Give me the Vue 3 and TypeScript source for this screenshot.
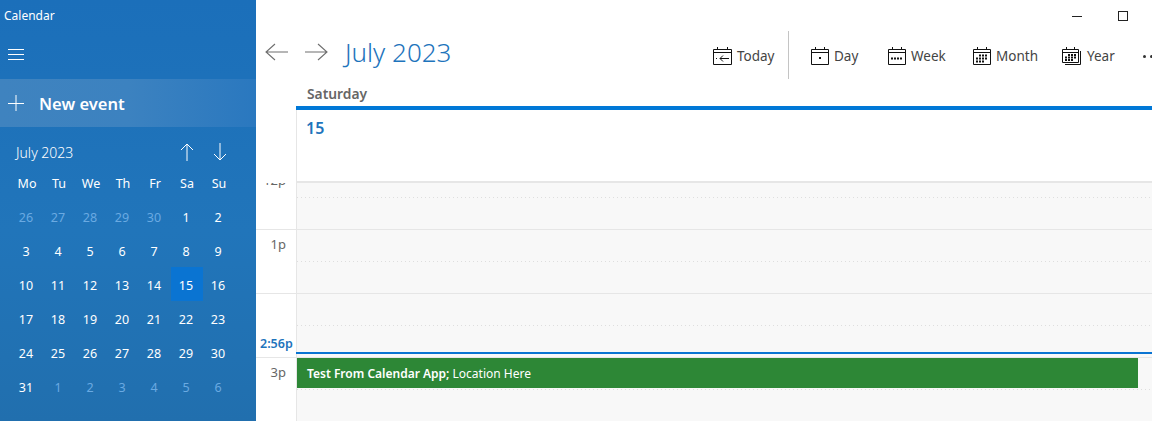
<script setup lang="ts">
interface Day {
  label: number;
  muted: boolean;
  selected: boolean;
}

const weekdays = ["Mo", "Tu", "We", "Th", "Fr", "Sa", "Su"];

// mini month starts on the monday before july 1st
const days: Day[] = [];
for (let i = 26; i <= 30; i++) days.push({ label: i, muted: true, selected: false });
for (let i = 1; i <= 31; i++) days.push({ label: i, muted: false, selected: i === 15 });
for (let i = 1; i <= 6; i++) days.push({ label: i, muted: true, selected: false });

// the 2p label is hidden while the now marker sits near it
const hours = ["12p", "1p", "", "3p"];
</script>

<template>
  <div class="app">
    <aside class="sidebar">
      <div class="app-title">Calendar</div>
      <div class="menu-row">
        <svg width="16" height="11" viewBox="0 0 16 11" fill="none" stroke="#fff">
          <path d="M0 .5h16M0 5.5h16M0 10.5h16" />
        </svg>
      </div>
      <div class="new-event">
        <svg width="16" height="16" viewBox="0 0 16 16" fill="none" stroke="#fff">
          <path d="M8 0v16M0 8.5h16" />
        </svg>
        <span>New event</span>
      </div>
      <div class="mini-head">
        <span class="mini-title">July 2023</span>
        <svg class="arrow-up" width="14" height="18" viewBox="0 0 14 18" fill="none" stroke="#fff">
          <path d="M7 18V1M1 7l6-6 6 6" />
        </svg>
        <svg class="arrow-down" width="14" height="18" viewBox="0 0 14 18" fill="none" stroke="#fff">
          <path d="M7 0v17M1 11l6 6 6-6" />
        </svg>
      </div>
      <div class="mini-grid">
        <div v-for="w in weekdays" :key="w" class="weekday">{{ w }}</div>
        <div
          v-for="(d, i) in days"
          :key="i"
          class="day"
          :class="{ muted: d.muted, selected: d.selected }"
        >
          {{ d.label }}
        </div>
      </div>
    </aside>

    <main class="main">
      <div class="window-controls">
        <div class="win-btn">
          <svg width="10" height="10" viewBox="0 0 10 10" stroke="#222"><path d="M0 5.5h10" /></svg>
        </div>
        <div class="win-btn">
          <svg width="10" height="10" viewBox="0 0 10 10" fill="none" stroke="#222"><rect x=".5" y=".5" width="9" height="9" /></svg>
        </div>
      </div>

      <div class="nav-row">
        <svg class="nav-arrow" width="23" height="18" viewBox="0 0 23 18" fill="none" stroke="#6e6e6e" stroke-width="1.1">
          <path d="M23 9H1M10 1 1 9l9 8" />
        </svg>
        <svg class="nav-arrow" width="23" height="18" viewBox="0 0 23 18" fill="none" stroke="#6e6e6e" stroke-width="1.1">
          <path d="M0 9h22M13 1l9 8-9 8" />
        </svg>
        <h1 class="month-title">July 2023</h1>

        <div class="toolbar">
          <div class="tool">
            <svg width="19" height="19" viewBox="0 0 19 19" fill="none" stroke="#111">
              <path d="M.5 3.5h18v15H.5zM.5 6.5h18M4.5 1v2M14.5 1v2M16 12.5H7M10 9.5l-3 3 3 3M3 12.5h1" />
            </svg>
            <span>Today</span>
          </div>
          <div class="tool-sep"></div>
          <div class="tool">
            <svg width="18" height="19" viewBox="0 0 18 19" fill="none" stroke="#111">
              <path d="M.5 3.5h17v15H.5zM.5 6.5h17M4.5 1v2M13.5 1v2" />
              <rect x="8" y="11" width="2" height="2" fill="#111" stroke="none" />
            </svg>
            <span>Day</span>
          </div>
          <div class="tool">
            <svg width="18" height="19" viewBox="0 0 18 19" fill="none" stroke="#111">
              <path d="M.5 3.5h17v15H.5zM.5 6.5h17M4.5 1v2M13.5 1v2" />
              <path d="M3 12.5h12" stroke-width="2" stroke-dasharray="2 1" />
            </svg>
            <span>Week</span>
          </div>
          <div class="tool">
            <svg width="18" height="19" viewBox="0 0 18 19" fill="none" stroke="#111">
              <path d="M.5 3.5h17v15H.5zM.5 6.5h17M4.5 1v2M13.5 1v2" />
              <path d="M6 9.5h9M3 12.5h12M3 15.5h9" stroke-width="2" stroke-dasharray="2 1" />
            </svg>
            <span>Month</span>
          </div>
          <div class="tool">
            <svg width="20" height="19" viewBox="0 0 20 19" fill="none" stroke="#111">
              <path d="M.5 3.5h16v13H.5zM.5 6.5h16M4.5 1v2M12.5 1v2M18.5 5v13.5H3" />
              <path d="M6 9h8M3 11.5h11M3 14h8" stroke-width="2" stroke-dasharray="2 1" />
            </svg>
            <span>Year</span>
          </div>
          <div class="more">
            <i></i>
            <i></i>
          </div>
        </div>
      </div>

      <div class="day-name">Saturday</div>

      <div class="all-day">
        <div class="all-day-cell">15</div>
      </div>

      <div class="scroller">
        <div class="hours">
          <div v-for="(h, i) in hours" :key="i" class="hour">
            <div class="hour-label">{{ h }}</div>
            <div class="hour-cell"></div>
          </div>
        </div>
        <div class="now-label">2:56p</div>
        <div class="now-line"></div>
        <div class="event"><b>Test From Calendar App;</b> Location Here</div>
      </div>
    </main>
  </div>
</template>

<style>
html,
body {
  margin: 0;
  overflow: hidden;
  background: #fff;
}
</style>

<style scoped>
.app {
  display: flex;
  width: 1152px;
  height: 421px;
  overflow: hidden;
  font-family: "Noto Sans", "Open Sans", sans-serif;
}

/* Left pane */
.sidebar {
  flex: 0 0 256px;
  display: flex;
  flex-direction: column;
  color: #fff;
  background: linear-gradient(180deg, #1b6fba 0%, #2175ba 55%, #216fae 100%);
}

.app-title {
  height: 31px;
  padding-left: 4px;
  font-size: 12px;
  line-height: 31px;
}

.menu-row {
  height: 48px;
  display: flex;
  align-items: center;
  padding: 0 0 1px 8px;
  box-sizing: border-box;
}

.new-event {
  height: 48px;
  display: flex;
  align-items: center;
  gap: 15px;
  padding-left: 8px;
  font-size: 16.5px;
  font-weight: 600;
  background: linear-gradient(90deg, #3f83bf 0%, #3c82c0 50%, #2a78bf 100%);
}

.mini-head {
  height: 28px;
  margin-top: 11px;
  display: flex;
  align-items: center;
}

.mini-title {
  flex: 1;
  padding-left: 16px;
  font-size: 14px;
  font-weight: 300;
}

.arrow-up {
  margin-right: 19px;
}

.arrow-down {
  margin-right: 29px;
}

.mini-grid {
  display: grid;
  grid-template-columns: repeat(7, 32px);
  grid-auto-rows: 34px;
  padding-left: 11px;
}

.weekday {
  height: 33px;
  font-size: 12.5px;
  line-height: 35px;
  text-align: center;
}

.day {
  margin-top: -1px;
  height: 34px;
  box-sizing: border-box;
  padding-right: 2px;
  font-size: 12.5px;
  line-height: 37px;
  text-align: center;
}

.day.muted {
  color: #6aaae2;
}

.day.selected {
  background: #0a74d2;
}

/* Right pane */
.main {
  flex: 1;
  min-width: 0;
  display: flex;
  flex-direction: column;
  background: #fff;
}

.window-controls {
  height: 31px;
  display: flex;
  justify-content: flex-end;
  padding-right: 6px;
}

.win-btn {
  width: 46px;
  display: flex;
  align-items: center;
  justify-content: center;
}

.nav-row {
  height: 48px;
  display: flex;
  align-items: center;
  padding-left: 9px;
}

.nav-arrow {
  margin: 0 17px 6px 0;
  flex: none;
}

.month-title {
  margin: 0 0 6px 0;
  font-size: 26px;
  font-weight: 300;
  color: #1e74bc;
}

.toolbar {
  margin-left: auto;
  display: grid;
  grid-template-columns: 75px 23px 77px 85px 89px 81px 9px;
  height: 48px;
  align-items: center;
  font-size: 13.5px;
  color: #444;
}

.tool {
  display: flex;
  align-items: center;
  gap: 5px;
}

.tool span {
  padding-top: 2px;
}

.tool-sep {
  width: 1px;
  height: 48px;
  background: #c4c4c4;
}

.more {
  display: flex;
  gap: 4px;
  padding-top: 2px;
}

.more i {
  flex: none;
  width: 3px;
  height: 3px;
  border-radius: 50%;
  background: #333;
}

.day-name {
  height: 27px;
  padding-left: 51px;
  font-size: 13.8px;
  font-weight: 600;
  line-height: 29px;
  color: #666;
}

.all-day {
  height: 71px;
  margin-left: 40px;
  border-top: 4px solid #0078d7;
  border-bottom: 2px solid #e6e6e6;
}

.all-day-cell {
  height: 100%;
  padding-left: 9px;
  border-left: 1px solid #e6e6e6;
  font-size: 16px;
  font-weight: 600;
  line-height: 36px;
  color: #1e74bc;
}

.scroller {
  position: relative;
  flex: 1;
  overflow: hidden;
}

.hours {
  margin-top: -17px;
}

.hour {
  display: flex;
  height: 64px;
  box-sizing: border-box;
  border-bottom: 1px solid #e6e6e6;
}

.hour-label {
  width: 40px;
  box-sizing: border-box;
  padding: 4px 10px 0 0;
  font-size: 13px;
  line-height: 20px;
  text-align: right;
  color: #666;
}

.hour-cell {
  flex: 1;
  border-left: 1px solid #e6e6e6;
  background: #f8f8f8 linear-gradient(90deg, #dedede 1px, transparent 1px) 4px 31px / 4px 1px repeat-x;
}

/* Current time marker */
.now-label {
  position: absolute;
  left: 4px;
  top: 152px;
  font-size: 12.5px;
  font-weight: 600;
  line-height: 18px;
  color: #1e74bc;
}

.now-line {
  position: absolute;
  left: 40px;
  right: 0;
  top: 169px;
  height: 2px;
  background: #0a74d2;
}

.event {
  position: absolute;
  left: 41px;
  top: 175px;
  width: 841px;
  height: 30px;
  box-sizing: border-box;
  padding-left: 10px;
  background: #2d8736;
  font-size: 12px;
  line-height: 31px;
  color: #fff;
}

.event b {
  font-weight: 600;
}
</style>
